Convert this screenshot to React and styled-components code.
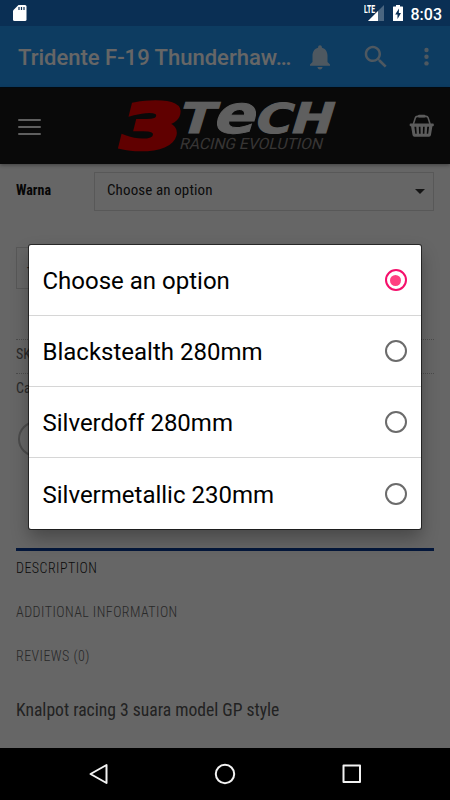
import React from 'react'
import styled, { createGlobalStyle } from 'styled-components'

const GlobalStyle = createGlobalStyle`
  * {
    box-sizing: border-box;
  }

  body {
    margin: 0;
    background: #000;
    font-family: Roboto, sans-serif;
  }
`

const Screen = styled.div`
  position: relative;
  display: flex;
  flex-direction: column;
  width: 450px;
  height: 800px;
  overflow: hidden;
`

const StatusBar = styled.header`
  display: flex;
  align-items: center;
  height: 26px;
  padding: 0 8px 0 12px;
  background: #0a2f54;
  color: #fff;
`

const Clock = styled.time`
  margin-left: 7px;
  padding-top: 2px;
  font-size: 16px;
  font-weight: 500;
  line-height: 23px;
`

const StatusIcons = styled.div`
  display: flex;
  align-items: center;
  margin-left: auto;

  svg {
    display: block;
  }
`

const Battery = styled.svg`
  margin-left: 7px;
`

const Dimmed = styled.div`
  position: relative;
  display: flex;
  flex-direction: column;
  flex: 1;
  background: #fff;
`

const Scrim = styled.div`
  position: absolute;
  inset: 0;
  background: rgba(0, 0, 0, 0.6);
`

const AppBar = styled.div`
  display: flex;
  align-items: center;
  height: 62px;
  padding-left: 18px;
  border-bottom: 1px solid #061a2c;
  background: #2196f3;
  color: #fff;
`

const Title = styled.h1`
  width: 274px;
  margin: 0;
  padding-top: 2px;
  font-size: 22px;
  font-weight: 500;
  line-height: 30px;
  white-space: nowrap;
`

const AppIcon = styled.svg`
  display: block;
  flex: none;
  margin-left: ${props => props.$gap}px;
  fill: #c3dcf0;
`

const SiteHeader = styled.div`
  display: flex;
  align-items: center;
  height: 76px;
  padding: 0 16px 0 18px;
  background: #171717;
  box-shadow: 0 1px 4px rgba(0, 0, 0, 0.4);
`

const Burger = styled.div`
  display: flex;
  flex-direction: column;
  gap: 5px;
  width: 23px;
  padding-top: 2px;

  span {
    height: 2px;
    border-radius: 1px;
    background: #eee;
  }
`

const Logo = styled.svg`
  display: block;
  margin-left: 69px;
  margin-right: 67px;
  overflow: visible;
`

const Content = styled.main`
  padding: 8px 16px 0;
  color: #333;
`

const Condensed = styled.span`
  display: inline-block;
  font-family: 'Roboto Condensed', Roboto, sans-serif;
  font-stretch: 75%;
  font-size: ${props => props.$size || 14}px;
  font-weight: ${props => props.$weight || 400};
  letter-spacing: ${props => props.$spacing || 0}px;
  color: ${props => props.$color || '#222'};
  white-space: nowrap;
`

const Variation = styled.div`
  display: grid;
  grid-template-columns: 78px 1fr;
`

const Label = styled.div`
  padding-top: 8px;
`

const Select = styled.div`
  display: flex;
  align-items: center;
  justify-content: space-between;
  height: 39px;
  padding: 0 8px 4px 12px;
  border: 1px solid #ddd;
`

const Caret = styled.i`
  margin-top: 4px;
  border: 5px solid transparent;
  border-top-color: #333;
  border-bottom: 0;
`

const Quantity = styled.div`
  width: 100px;
  height: 42px;
  margin-top: 36px;
  padding: 10px;
  border: 1px solid #ddd;
  color: #555;
  line-height: 20px;
`

const Meta = styled.div`
  margin-top: 50px;
`

const MetaRow = styled.div`
  height: 34px;
  padding-top: 4px;
  border-top: 1px dotted #bbb;
`

const Share = styled.div`
  width: 36px;
  height: 36px;
  margin: 14px 0 0 2px;
  border: 2px solid #bbb;
  border-radius: 50%;
`

const Tabs = styled.div`
  margin-top: 91px;
  border-top: 3px solid #0b3a94;
`

const Tab = styled.div`
  height: 44px;
  padding-top: 7px;
`

const Summary = styled.div`
  padding-top: 17px;
`

const Dialog = styled.div`
  position: absolute;
  left: 29px;
  top: 245px;
  width: 392px;
  border-radius: 2px;
  background: #fff;
  box-shadow: 0 0 0 1px rgba(0, 0, 0, 0.6), 0 9px 18px rgba(0, 0, 0, 0.3);
`

const Option = styled.label`
  display: flex;
  align-items: center;
  justify-content: space-between;
  height: 71px;
  padding: 0 14.5px 0 13.5px;
  color: #000;
  font-size: 24px;

  &:not(:last-child) {
    border-bottom: 1px solid #d6d6d6;
  }
`

const OptionText = styled.span`
  padding-top: 2px;
`

const Radio = styled.span`
  display: flex;
  align-items: center;
  justify-content: center;
  width: 22px;
  height: 22px;
  border: 2px solid ${props => props.$checked ? '#f50f6b' : '#6b6b6b'};
  border-radius: 50%;

  &::after {
    content: '';
    width: 11px;
    height: 11px;
    border-radius: 50%;
    background: ${props => props.$checked ? '#ff4081' : 'transparent'};
  }
`

const NavBar = styled.nav`
  display: flex;
  align-items: center;
  justify-content: space-between;
  height: 52px;
  padding: 0 86px;
  background: #000;

  svg {
    display: block;
    fill: none;
    stroke: #f2f2f2;
    stroke-width: 2;
    stroke-linejoin: round;
  }
`

const OPTIONS = [
  'Choose an option',
  'Blackstealth 280mm',
  'Silverdoff 280mm',
  'Silvermetallic 230mm'
]

const Brand = () => (
  <Logo width="232" height="68" viewBox="110 92 232 68" fontFamily="DejaVu Sans" fontWeight="700">
    <g transform="translate(118 151) skewX(-14)">
      <text x="-3" y="-3" fontSize="61" textLength="61" lengthAdjust="spacingAndGlyphs" fill="#f00000" stroke="#f00000" strokeWidth="5">3</text>
    </g>
    <g transform="translate(182 134) skewX(-17)" fill="#eee" stroke="#eee" strokeWidth="1">
      <text x="-6" y="-1" fontSize="42" textLength="35" lengthAdjust="spacingAndGlyphs">T</text>
      <text x="29" y="-1" fontSize="53" textLength="42" lengthAdjust="spacingAndGlyphs">e</text>
      <text x="70" y="-1" fontSize="41" textLength="37" lengthAdjust="spacingAndGlyphs">C</text>
      <text x="106" y="-1" fontSize="42" textLength="42" lengthAdjust="spacingAndGlyphs">H</text>
    </g>
    <g transform="translate(179 149) skewX(-14)">
      <text x="0" y="0" fontFamily="Roboto" fontWeight="400" fontSize="15.5" textLength="143" lengthAdjust="spacingAndGlyphs" fill="#8a8583">RACING EVOLUTION</text>
    </g>
  </Logo>
)

const Basket = () => (
  <svg width="26" height="24" viewBox="0 0 26 24" fill="none" stroke="#e6e6e6">
    <path d="M4.5 10 6.5 3.5Q7 2.2 8.5 2.2H17.5Q19 2.2 19.5 3.5L21.5 10" strokeWidth="1.6" />
    <path d="M10.500 2h5" strokeWidth="2.800" strokeLinecap="round" />
    <path fillRule="evenodd" stroke="none" fill="#e6e6e6" d="M1.5 9.5h23q.8 0 .8.8v1.2q0 .8-.8.8h-.6l-1.5 9q-.3 1.7-2 1.7H5.600q-1.700 0-2-1.700l-1.500-9h-.6q-.8 0-.8-.8v-1.200q0-.8.8-.8zM5.500 12.800l.9 7h1.500l-.5-7zM10 12.800l.3 7h1.600l-.2-7zM14.300 12.800l-.2 7h1.600l.3-7zM18.600 12.800l-.5 7h1.500l.9-7z" />
  </svg>
)

const App = () => (
  <Screen>
    <GlobalStyle />
    <StatusBar>
      <svg width="16" height="18" viewBox="0 0 16 18">
        <path d="M6.500 1H13q1.500 0 1.500 1.500v13q0 1.500-1.500 1.500H2.500Q1 17 1 15.500V6.500z" fill="#fff" />
        <path d="M7 3v3M9.500 3v3M12 3v3" stroke="#0a2f54" strokeWidth="1.200" />
      </svg>
      <StatusIcons>
        <svg width="21" height="18" viewBox="0 0 21 18">
          <path d="M20 1v16H4z" fill="#4b6680" />
          <path d="M14 7v10H4z" fill="#fff" />
          <path d="M0 0h11v9H0z" fill="#0a2f54" />
          <text x="0" y="8.500" fontFamily="Roboto" fontWeight="800" fontSize="10" textLength="11" lengthAdjust="spacingAndGlyphs" fill="#fff">LTE</text>
        </svg>
        <Battery width="12" height="18" viewBox="0 0 12 18">
          <path d="M4 1h4v1.500h2.500q.5 0 .5.5v13.500q0 .5-.5.5h-9q-.5 0-.5-.5V3q0-.5.5-.5H4z" fill="#fff" />
          <path d="M7 4.500 3.200 10.500h2.300V15L9 9H6.800z" fill="#0a2f54" />
        </Battery>
        <Clock>8:03</Clock>
      </StatusIcons>
    </StatusBar>
    <Dimmed>
      <AppBar>
        <Title>Tridente F-19 Thunderhaw…</Title>
        <AppIcon $gap={13} width="30" height="30" viewBox="0 0 24 24">
          <path d="M12 22c1.100 0 2-.9 2-2h-4c0 1.100.9 2 2 2zm6-6v-5c0-3.070-1.630-5.640-4.500-6.320V4c0-.83-.67-1.500-1.500-1.500s-1.500.67-1.500 1.500v.68C7.640 5.360 6 7.920 6 11v5l-2 2v1h16v-1l-2-2z" />
        </AppIcon>
        <AppIcon $gap={26} width="30" height="30" viewBox="0 0 24 24">
          <path d="M15.500 14h-.79l-.28-.27C15.410 12.590 16 11.110 16 9.500 16 5.910 13.090 3 9.500 3S3 5.910 3 9.500 5.910 16 9.500 16c1.610 0 3.090-.59 4.230-1.570l.27.28v.79l5 4.990L20.490 19l-4.990-5zm-6 0C7.010 14 5 11.990 5 9.500S7.010 5 9.500 5 14 7.010 14 9.500 11.990 14 9.500 14z" />
        </AppIcon>
        <AppIcon $gap={20.5} width="29" height="29" viewBox="0 0 29 29">
          <circle cx="14.500" cy="8" r="2.200" />
          <circle cx="14.500" cy="14.700" r="2.200" />
          <circle cx="14.500" cy="21.400" r="2.200" />
        </AppIcon>
      </AppBar>
      <SiteHeader>
        <Burger><span /><span /><span /></Burger>
        <Brand />
        <Basket />
      </SiteHeader>
      <Content>
        <Variation>
          <Label><Condensed $weight={700} $color="#111">Warna</Condensed></Label>
          <Select>
            <Condensed $size={15} $spacing={0.12}>Choose an option</Condensed>
            <Caret />
          </Select>
        </Variation>
        <Quantity>-</Quantity>
        <Meta>
          <MetaRow><Condensed $size={14} $color="#666">SK</Condensed></MetaRow>
          <MetaRow><Condensed $size={14} $color="#666">Ca</Condensed></MetaRow>
        </Meta>
        <Share />
        <Tabs>
          <Tab><Condensed $weight={300} $spacing={0.45}>DESCRIPTION</Condensed></Tab>
          <Tab><Condensed $weight={300} $spacing={0.45} $color="#666">ADDITIONAL INFORMATION</Condensed></Tab>
          <Tab><Condensed $weight={300} $spacing={0.45} $color="#666">REVIEWS (0)</Condensed></Tab>
        </Tabs>
        <Summary>
          <Condensed $size={17.6} $color="#555">Knalpot racing 3 suara model GP style</Condensed>
        </Summary>
      </Content>
      <Scrim />
    </Dimmed>
    <NavBar>
      <svg width="24" height="24" viewBox="0 0 24 24"><path d="M20.500 3v18L4.500 12z" /></svg>
      <svg width="24" height="24" viewBox="0 0 24 24"><circle cx="12" cy="12" r="9.200" /></svg>
      <svg width="24" height="24" viewBox="0 0 24 24"><path d="M3.500 3.500h16.500v16.500H3.500z" /></svg>
    </NavBar>
    <Dialog>
      {OPTIONS.map((option, i) => (
        <Option key={option}>
          <OptionText>{option}</OptionText>
          <Radio $checked={i === 0} />
        </Option>
      ))}
    </Dialog>
  </Screen>
)

export default App
